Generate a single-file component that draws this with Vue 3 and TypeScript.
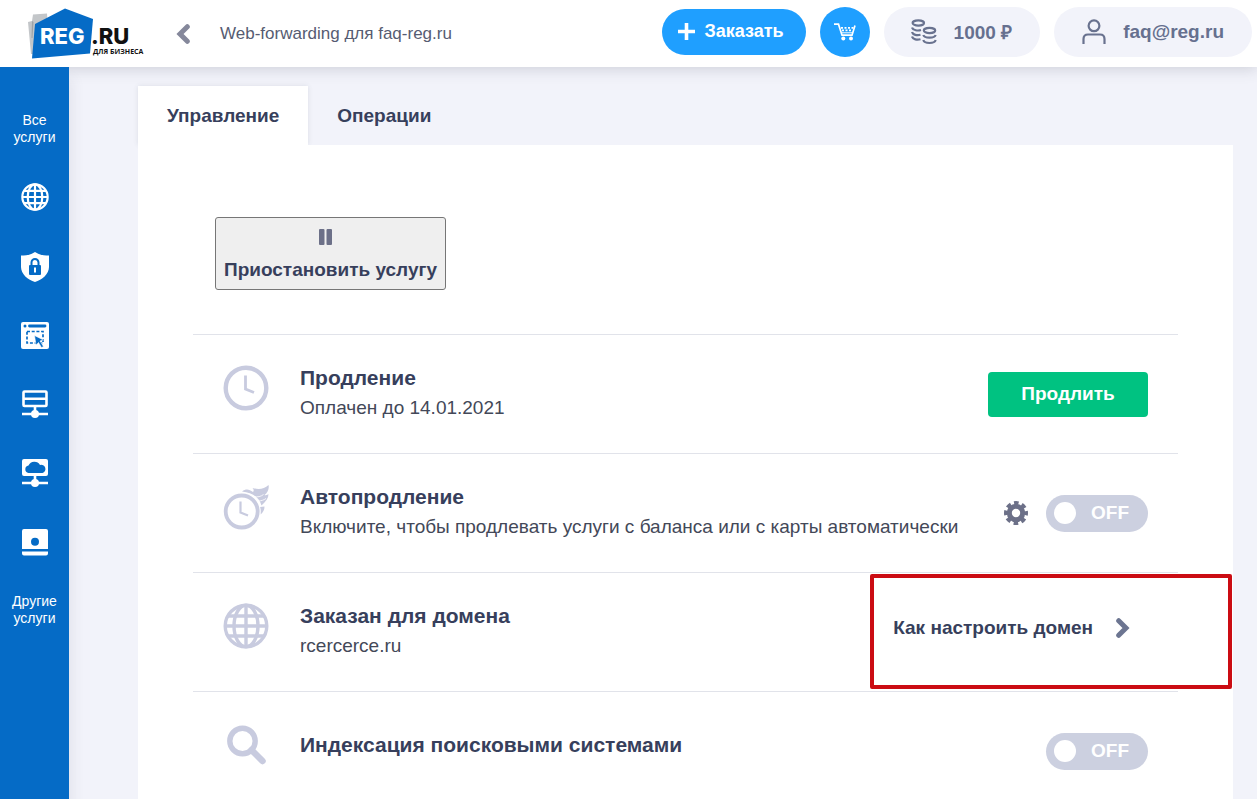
<script setup lang="ts">
import { ref } from 'vue'

const sections = ['globe', 'shield', 'site', 'server', 'cloud', 'disk'] as const
const labels: Record<string, string> = {
  globe: 'Домены',
  shield: 'Безопасность',
  site: 'Сайты',
  server: 'Серверы',
  cloud: 'Облако',
  disk: 'Хранилище',
}
const autoRenew = ref(false)
const indexing = ref(false)
</script>

<template>
  <div class="page">
    <header class="top">
      <a class="logo" href="#" aria-label="REG.RU для бизнеса">
        <svg width="118" height="52" viewBox="0 0 118 52">
          <path d="M0 14 L4 13 L5 6.500 L19 5.500 L20 20 L5 46 L3 46 Z" fill="#c3c6c9" />
          <path d="M4 13 L5.500 14 L4.500 30 L3.500 30 Z" fill="#9da2a7" />
          <path d="M7 16 L37 .5 L65 11 L62 45.500 L4 50.500 Z" fill="#056bc6" />
          <text x="12" y="36" class="logo-main" fill="#ffffff">REG</text>
          <text x="63" y="36" class="logo-main" fill="#111111">.RU</text>
          <text x="65" y="46" class="logo-sub" fill="#111111">ДЛЯ БИЗНЕСА</text>
        </svg>
      </a>
      <button class="back" type="button" aria-label="Назад">
        <svg width="14" height="20" viewBox="0 0 14 20"><path d="M11.300 2.700 L4 10 L11.300 17.300" fill="none" stroke="#85889b" stroke-width="5" stroke-linecap="round" /></svg>
      </button>
      <span class="crumb">Web-forwarding для faq-reg.ru</span>
      <div class="actions">
        <button class="order" type="button">
          <svg width="17" height="17" viewBox="0 0 17 17"><path d="M8.500 0 V17 M0 8.500 H17" stroke="#fff" stroke-width="3.600" /></svg>
          Заказать
        </button>
        <button class="cart" type="button" aria-label="Корзина">
          <svg width="22" height="18" viewBox="0 0 22 18">
            <path d="M0 1.200 H4.500 L8 12.200 H18 L21 2.500" fill="none" stroke="#fff" stroke-width="1.700" />
            <path d="M7 4.800 H19.500 M8 7.300 H18.500" stroke="#fff" stroke-width="1.700" stroke-dasharray="2 1.500" />
            <path d="M8 9.800 H18" stroke="#fff" stroke-width="1" />
            <circle cx="9.300" cy="15.600" r="2" fill="#fff" /><circle cx="17" cy="15.600" r="2" fill="#fff" />
          </svg>
        </button>
        <a class="pill balance" href="#">
          <svg width="26" height="26" viewBox="0 0 26 26" fill="none" stroke="#69728f" stroke-width="2.200">
            <ellipse cx="7.300" cy="4" rx="5.700" ry="2.600" />
            <path d="M1 8.500 C2 11.500 7 12 10 11 M1 13 C2 16 6 16.800 9.500 15.800 M1 17.500 C2 20.500 6 21.300 9.500 20.300" />
            <ellipse cx="18.500" cy="11.500" rx="5.700" ry="2.600" />
            <path d="M12.300 16 C13.500 19.500 23.500 19.500 24.700 16 M12.300 21 C13.500 25 23.500 25 24.700 21" />
          </svg>
          1000 ₽
        </a>
        <a class="pill user" href="#">
          <svg width="24" height="26" viewBox="0 0 24 26" fill="none" stroke="#69728f" stroke-width="2.200">
            <circle cx="12" cy="6.800" r="5.400" />
            <path d="M1.500 25 V20 Q1.500 15.500 6 15.500 H18 Q22.500 15.500 22.500 20 V25" />
          </svg>
          faq@reg.ru
        </a>
      </div>
    </header>

    <div class="body">
      <nav class="side">
        <a href="#" class="side-text">Все<br />услуги</a>
        <div class="side-icons">
          <a v-for="s in sections" :key="s" href="#" :aria-label="labels[s]">
            <svg v-if="s === 'globe'" width="28" height="28" viewBox="0 0 46 46" fill="none" stroke="#fff" stroke-width="3.600">
              <circle cx="23" cy="23" r="20.800" /><ellipse cx="23" cy="23" rx="12" ry="20.800" />
              <path d="M23 2 V44 M2 23 H44 M5 13 H41 M5 33 H41" />
            </svg>
            <svg v-else-if="s === 'shield'" width="28" height="30" viewBox="0 0 28 30">
              <path d="M14 0 C18 3 23 3.500 28 3.500 V15 C28 22 21 28 14 30 C7 28 0 22 0 15 V3.500 C5 3.500 10 3 14 0 Z" fill="#fff" />
              <rect x="8" y="13" width="12" height="10" rx="1" fill="#056bc6" />
              <path d="M10.500 13 V10.500 a3.500 3.500 0 0 1 7 0 V13" fill="none" stroke="#056bc6" stroke-width="2" />
              <path d="M14 15.500 V20.500" stroke="#fff" stroke-width="2" />
            </svg>
            <svg v-else-if="s === 'site'" width="28" height="27" viewBox="0 0 28 27">
              <rect width="28" height="27" rx="2" fill="#fff" />
              <circle cx="4" cy="4" r="1.500" fill="#056bc6" />
              <path d="M8.500 4 H24" stroke="#056bc6" stroke-width="2.800" stroke-linecap="round" />
              <rect x="6" y="9.500" width="16" height="11.500" fill="none" stroke="#056bc6" stroke-width="1.700" stroke-dasharray="3 1.700" />
              <path d="M13.500 13.500 L22.500 18 L19 19 L22.500 24.500 L20.500 25.500 L17.500 20.500 L15 23 Z" fill="#056bc6" stroke="#fff" stroke-width=".6" />
            </svg>
            <svg v-else-if="s === 'server'" width="26" height="28" viewBox="0 0 26 28" fill="none" stroke="#fff" stroke-width="2.600">
              <rect x="1.500" y="1.500" width="23" height="14.500" rx="1" />
              <path d="M1 8.800 H25 M13 16 V22 M0 24 H26" /><circle cx="13" cy="24" r="4" fill="#fff" stroke="none" />
            </svg>
            <svg v-else-if="s === 'cloud'" width="26" height="28" viewBox="0 0 26 28">
              <rect width="26" height="17" rx="2" fill="#fff" />
              <path d="M6.500 14 a3.800 3.800 0 0 1 0 -7.500 a6.500 6.500 0 0 1 11.500 -.5 a4.100 4.100 0 0 1 2.500 8 Z" fill="#056bc6" />
              <path d="M13 16 V22 M0 24 H26" stroke="#fff" stroke-width="2.600" /><circle cx="13" cy="24" r="4" fill="#fff" />
            </svg>
            <svg v-else width="26" height="27" viewBox="0 0 26 27">
              <path d="M2 0 H24 Q26 0 26 2 V20 H0 V2 Q0 0 2 0 Z M0 22.500 H26 V24.500 Q26 26.500 24 26.500 H2 Q0 26.500 0 24.500 Z" fill="#fff" />
              <circle cx="13" cy="12.800" r="4" fill="#056bc6" />
            </svg>
          </a>
        </div>
        <a href="#" class="side-text">Другие<br />услуги</a>
      </nav>

      <main class="content">
        <div class="tabs" role="tablist">
          <button class="tab active" type="button" role="tab" aria-selected="true">Управление</button>
          <button class="tab" type="button" role="tab" aria-selected="false">Операции</button>
        </div>
        <section class="panel">
          <button class="pause" type="button">
            <svg width="22" height="16" viewBox="0 0 22 16" fill="#6c7088"><rect width="5.500" height="16" rx="1" /><rect x="7.500" width="5.500" height="16" rx="1" /></svg>
            Приостановить услугу
          </button>

          <ul class="rows">
            <li class="row">
              <svg class="icon" viewBox="0 0 46 46" fill="none" stroke="#c8cbdf">
                <circle cx="23" cy="23" r="20.300" stroke-width="4.400" /><path d="M22.500 10.500 V24 L31 27.500" stroke-width="2.800" />
              </svg>
              <div class="text"><h2>Продление</h2><p>Оплачен до 14.01.2021</p></div>
              <div class="control"><button class="renew" type="button">Продлить</button></div>
            </li>
            <li class="row">
              <svg class="icon" viewBox="0 0 46 46" fill="none" stroke="#c8cbdf">
                <path d="M19 7.500 C23 4.500 26 5 30 8 C31 7 31 5.500 29.500 4 C35 5.500 41 5.500 45.500 1 C46.500 5 44.500 9 41.500 11 C43 11.500 44.500 11 45.500 10 C45.500 14 43 17.500 38.500 21.500 C36 13 29 8.500 19 7.500 Z" fill="#c8cbdf" stroke="none" />
                <path d="M31 12.500 C34.500 13.500 38 12.500 40.500 10.500 M35 17 C38 17 41 16 43 14.500" stroke="#fff" stroke-width=".8" />
                <path d="M37 23 L41.500 22.500 C41.500 25.500 40.500 28 37.500 30.500 Z" fill="#c8cbdf" stroke="none" />
                <circle cx="18.700" cy="27.500" r="19" fill="#fff" stroke="none" />
                <circle cx="18.700" cy="27.500" r="16" stroke-width="3.800" /><path d="M17.500 17.500 V28.500 L25 31.500" stroke-width="2.200" />
              </svg>
              <div class="text"><h2>Автопродление</h2><p>Включите, чтобы продлевать услуги с баланса или с карты автоматически</p></div>
              <div class="control">
                <button class="gear" type="button" aria-label="Настройки автопродления">
                  <svg width="24" height="24" viewBox="0 0 24 24" fill="none" stroke="#6c7088">
                    <circle cx="12" cy="12" r="6.700" stroke-width="5" />
                    <circle cx="12" cy="12" r="10.200" stroke-width="3.600" stroke-dasharray="4.600 3.411" stroke-dashoffset="2.300" />
                  </svg>
                </button>
                <label class="toggle"><input v-model="autoRenew" type="checkbox" aria-label="Автопродление" /><span>{{ autoRenew ? 'ON' : 'OFF' }}</span></label>
              </div>
            </li>
            <li class="row">
              <svg class="icon" viewBox="0 0 46 46" fill="none" stroke="#c8cbdf" stroke-width="3.400">
                <circle cx="23" cy="23" r="20.800" /><ellipse cx="23" cy="23" rx="12" ry="20.800" />
                <path d="M23 2 V44 M2 23 H44 M5 13 H41 M5 33 H41" />
              </svg>
              <div class="text"><h2>Заказан для домена</h2><p>rcercerce.ru</p></div>
              <div class="control raised">
                <a class="help" href="#">Как настроить домен
                  <svg width="14" height="20" viewBox="0 0 14 20"><path d="M2.700 2.700 L10 10 L2.700 17.300" fill="none" stroke="#6c7591" stroke-width="5" stroke-linecap="round" /></svg>
                </a>
              </div>
              <span class="highlight" aria-hidden="true"></span>
            </li>
            <li class="row">
              <svg class="icon" viewBox="0 0 46 46" fill="none" stroke="#c8cbdf">
                <circle cx="19.500" cy="19" r="12.700" stroke-width="5.400" /><path d="M28.500 28 L39.500 39" stroke-width="6.500" stroke-linecap="round" />
              </svg>
              <div class="text"><h2>Индексация поисковыми системами</h2></div>
              <div class="control">
                <label class="toggle"><input v-model="indexing" type="checkbox" aria-label="Индексация поисковыми системами" /><span>{{ indexing ? 'ON' : 'OFF' }}</span></label>
              </div>
            </li>
          </ul>
        </section>
      </main>
    </div>
  </div>
</template>

<style>
body {
  background: #f2f3fa;
}
</style>

<style scoped>
.page {
  display: flex;
  flex-direction: column;
  min-height: 100vh;
  font-family: "Liberation Sans", Arial, sans-serif;
  color: #373f5c;
}
.page *,
.page {
  box-sizing: border-box;
}
button {
  font: inherit;
  color: inherit;
  border: 0;
  background: none;
  padding: 0;
  cursor: pointer;
}
a {
  color: inherit;
  text-decoration: none;
}
svg {
  display: block;
  flex: none;
}
.top {
  position: relative;
  z-index: 1;
  display: flex;
  align-items: center;
  height: 67px;
  padding: 0 5px 0 28px;
  background: #fff;
  box-shadow: 0 2px 14px rgba(60, 65, 85, 0.2);
}
.logo-main {
  font: 800 22px Inter, sans-serif;
}
.logo-sub {
  font: 700 7px "Open Sans", sans-serif;
}
.back {
  margin-left: 30px;
}
.crumb {
  margin-left: 30px;
  font-size: 17px;
  color: #565c72;
}
.actions {
  display: flex;
  align-items: center;
  gap: 14px;
  margin-left: auto;
  padding-bottom: 4px;
}
.order {
  display: flex;
  align-items: center;
  gap: 9px;
  height: 46px;
  padding: 0 22px 0 16px;
  border-radius: 23px;
  background: #1f9fff;
  color: #fff;
  font-size: 18px;
  font-weight: 700;
}
.cart {
  display: grid;
  place-items: center;
  width: 50px;
  height: 50px;
  border-radius: 50%;
  background: #1f9fff;
}
.pill {
  display: flex;
  align-items: center;
  height: 50px;
  border-radius: 25px;
  background: #f2f3fa;
  color: #66708f;
  font-size: 19px;
  font-weight: 700;
}
.balance {
  gap: 17px;
  padding: 0 28px 0 27px;
}
.user {
  gap: 17px;
  padding: 0 28px;
}
.body {
  display: flex;
  flex: 1;
}
.side {
  position: relative;
  z-index: 2;
  flex: none;
  width: 69px;
  padding-top: 45px;
  background: #056bc6;
  color: #fff;
  box-shadow: 4px 12px 12px rgba(60, 65, 85, 0.08);
}
.side-text {
  display: block;
  text-align: center;
  font-size: 14px;
  line-height: 17px;
}
.side-icons {
  display: flex;
  flex-direction: column;
  align-items: center;
  gap: 41px;
  padding: 37px 0;
}
.side-icons a {
  display: grid;
  place-items: center;
  height: 28px;
}
.content {
  display: flex;
  flex: 1;
  flex-direction: column;
  padding: 19px 24px 0 69px;
}
.tabs {
  display: flex;
}
.tab {
  height: 59px;
  padding: 0 29px;
  font-size: 19px;
  font-weight: 700;
}
.tab.active {
  background: #fff;
  box-shadow: 0 0 5px rgba(60, 65, 85, 0.12);
}
.panel {
  position: relative;
  flex: 1;
  padding: 72px 55px 0;
  background: #fff;
}
.pause {
  display: flex;
  flex-direction: column;
  align-items: center;
  gap: 14px;
  height: 73px;
  margin-left: 22px;
  padding: 11px 8px 0;
  border: 1px solid #767676;
  border-radius: 3px;
  background: #efefef;
  font-size: 19px;
  font-weight: 700;
}
.rows {
  margin: 44px 0 0;
  padding: 0;
  list-style: none;
}
.row {
  position: relative;
  display: flex;
  height: 119px;
  padding: 0 30px;
  border-top: 1px solid #e1e3ea;
}
.icon {
  width: 46px;
  height: 46px;
  margin-top: 30px;
}
.text {
  display: grid;
  align-content: center;
  align-self: flex-start;
  min-height: 50px;
  margin: 28px 0 0 31px;
}
h2,
p {
  margin: 0;
  line-height: 30px;
}
h2 {
  font-size: 21px;
}
p {
  font-size: 19px;
  color: #434858;
}
.control {
  display: flex;
  align-items: center;
  gap: 18px;
  margin-left: auto;
}
.raised {
  padding-bottom: 8px;
}
.renew {
  width: 160px;
  height: 45px;
  border-radius: 4px;
  background: #00c281;
  color: #fff;
  font-size: 19px;
  font-weight: 700;
}
.toggle {
  display: flex;
  align-items: center;
  gap: 15px;
  width: 102px;
  height: 37px;
  padding: 0 8px;
  border-radius: 19px;
  background: #ccd0e0;
  color: #fff;
  font-size: 19px;
  font-weight: 700;
  cursor: pointer;
}
.toggle input {
  appearance: none;
  width: 22px;
  height: 22px;
  margin: 0;
  border-radius: 50%;
  background: #fff;
}
.help {
  display: flex;
  align-items: center;
  gap: 23px;
  padding-right: 18px;
  font-size: 19px;
  font-weight: 700;
}
.highlight {
  position: absolute;
  top: 1px;
  right: -54px;
  width: 362px;
  height: 115px;
  border: 4px solid #cb0c13;
  border-radius: 2px;
  pointer-events: none;
}
</style>
